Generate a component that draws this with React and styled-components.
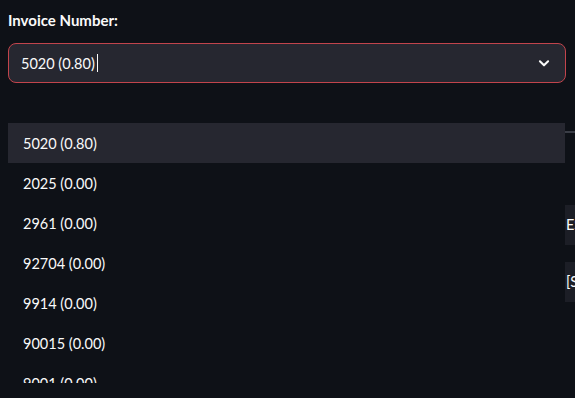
import React from "react";
import styled, { createGlobalStyle } from "styled-components";

const Global = createGlobalStyle`
  html, body { margin: 0; padding: 0; background: #0e1117; }
  body { font-family: "Source Sans Pro", Lato, "Open Sans", sans-serif; color: #fafafa; }
`;

const Page = styled.div`
  position: relative;
  width: 575px;
  height: 398px;
  overflow: hidden;
  background: #0e1117;
  padding: 9px 0 0 8px;
  box-sizing: border-box;
`;

const Label = styled.div`
  font-size: 15px;
  font-weight: 700;
  color: #fafafa;
  height: 22px;
  line-height: 22px;
  margin-bottom: 12px;
`;

const Select = styled.div`
  width: 558px;
  height: 40px;
  box-sizing: border-box;
  border: 1px solid #c2444c;
  border-radius: 8px;
  background: #262730;
  display: flex;
  align-items: center;
  padding: 0 14px 0 12px;
  font-size: 14.5px;
`;

const Value = styled.span`
  flex: 1;
  display: flex;
  align-items: center;
`;

const Caret = styled.span`
  display: inline-block;
  width: 1px;
  height: 18px;
  background: #fafafa;
  margin-left: 2px;
`;

const Behind = styled.div`
  margin-top: 40px;
  display: flex;
  flex-direction: column;
  align-items: flex-end;
`;

const Divider = styled.div`
  width: 10px;
  height: 2px;
  background: #3a3d46;
  margin-top: 8px;
`;

const SideButton = styled.div`
  width: 10px;
  height: 40px;
  background: #1c1e26;
  margin-top: ${(p) => p.$gap}px;
  font-size: 14.5px;
  line-height: 40px;
  overflow: hidden;
  white-space: nowrap;
  padding-left: 1px;
  box-sizing: border-box;
  color: #fafafa;
`;

const Menu = styled.ul`
  position: absolute;
  left: 8px;
  top: 123px;
  width: 557px;
  height: 260px;
  margin: 0;
  padding: 0;
  list-style: none;
  background: #0e1117;
  overflow: hidden;
`;

const Item = styled.li`
  height: 40px;
  display: flex;
  align-items: center;
  padding-left: 15px;
  font-size: 14.5px;
  color: #fafafa;
  background: ${(p) => (p.$active ? "#262730" : "transparent")};
`;

const options = [
  "5020 (0.80)",
  "2025 (0.00)",
  "2961 (0.00)",
  "92704 (0.00)",
  "9914 (0.00)",
  "90015 (0.00)",
  "9001 (0.00)",
];

function Chevron() {
  return (
    <svg width="14" height="14" viewBox="0 0 24 24" fill="none" stroke="#fafafa" strokeWidth="3.5" strokeLinecap="round" strokeLinejoin="round">
      <path d="M5 9l7 7 7-7" />
    </svg>
  );
}

export default function App() {
  return (
    <>
      <Global />
      <Page>
        <Label>Invoice Number:</Label>
        <Select>
          <Value>
            5020 (0.80)
            <Caret />
          </Value>
          <Chevron />
        </Select>
        <Behind>
          <Divider />
          <SideButton $gap={72}>ES</SideButton>
          <SideButton $gap={17}>[S</SideButton>
        </Behind>
        <Menu>
          {options.map((o, i) => (
            <Item key={o} $active={i === 0}>
              {o}
            </Item>
          ))}
        </Menu>
      </Page>
    </>
  );
}
